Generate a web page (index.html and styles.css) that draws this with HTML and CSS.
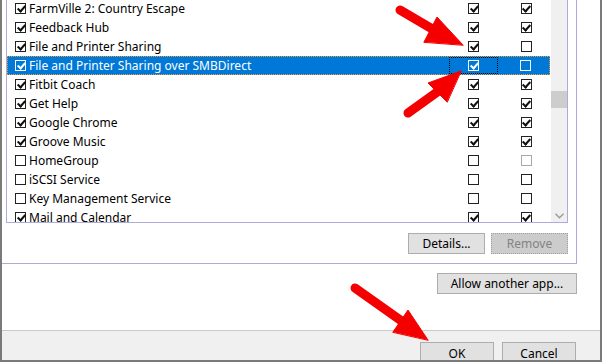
FILE: index.html
```html
<!DOCTYPE html>
<html>
<head>
<meta charset="utf-8">
<link rel="stylesheet" href="styles.css">
</head>
<body>
<div class="window">
  <div class="content">
    <div class="group">
      <div class="listbox">
        <div class="rows">
          <div class="row"><span class="cb on"></span><span class="name">FarmVille 2: Country Escape</span><span class="col"><span class="cb on"></span></span><span class="col c2"><span class="cb on"></span></span></div>
          <div class="row"><span class="cb on"></span><span class="name">Feedback Hub</span><span class="col"><span class="cb on"></span></span><span class="col c2"><span class="cb on"></span></span></div>
          <div class="row"><span class="cb on"></span><span class="name">File and Printer Sharing</span><span class="col"><span class="cb on"></span></span><span class="col c2"><span class="cb"></span></span></div>
          <div class="row sel"><span class="cb on"></span><span class="name">File and Printer Sharing over SMBDirect</span><span class="col focus"><span class="cb on"></span></span><span class="col c2"><span class="cb"></span></span></div>
          <div class="row"><span class="cb on"></span><span class="name">Fitbit Coach</span><span class="col"><span class="cb on"></span></span><span class="col c2"><span class="cb on"></span></span></div>
          <div class="row"><span class="cb on"></span><span class="name">Get Help</span><span class="col"><span class="cb on"></span></span><span class="col c2"><span class="cb on"></span></span></div>
          <div class="row"><span class="cb on"></span><span class="name">Google Chrome</span><span class="col"><span class="cb on"></span></span><span class="col c2"><span class="cb on"></span></span></div>
          <div class="row"><span class="cb on"></span><span class="name">Groove Music</span><span class="col"><span class="cb on"></span></span><span class="col c2"><span class="cb on"></span></span></div>
          <div class="row"><span class="cb"></span><span class="name">HomeGroup</span><span class="col"><span class="cb"></span></span><span class="col c2"><span class="cb dis"></span></span></div>
          <div class="row"><span class="cb"></span><span class="name">iSCSI Service</span><span class="col"><span class="cb"></span></span><span class="col c2"><span class="cb"></span></span></div>
          <div class="row"><span class="cb"></span><span class="name">Key Management Service</span><span class="col"><span class="cb"></span></span><span class="col c2"><span class="cb"></span></span></div>
          <div class="row"><span class="cb on"></span><span class="name">Mail and Calendar</span><span class="col"><span class="cb on"></span></span><span class="col c2"><span class="cb on"></span></span></div>
        </div>
        <div class="scrollbar">
          <div class="thumb"></div>
          <svg class="chev" width="9" height="6" viewBox="0 0 9 6"><path d="M0.5 0.8 L4.5 4.8 L8.5 0.8" fill="none" stroke="#9a9a9a" stroke-width="1.4"/></svg>
        </div>
      </div>
      <div class="btnrow">
        <button class="btn details">Details...</button>
        <button class="btn remove" disabled>Remove</button>
      </div>
    </div>
    <div class="allowrow">
      <button class="btn allow">Allow another app...</button>
    </div>
  </div>
  <div class="footer">
    <button class="btn ok">OK</button>
    <button class="btn cancel">Cancel</button>
  </div>
</div>
<svg class="arrows" width="602" height="362" viewBox="0 0 602 362">
  <g fill="#f50000" stroke="#f50000" stroke-linecap="round" stroke-linejoin="round">
    <line x1="400" y1="10" x2="434" y2="30" stroke-width="9"/>
    <polygon points="463,45 437,17 424,42" stroke-width="1"/>
    <line x1="408" y1="113" x2="440" y2="90" stroke-width="9"/>
    <polygon points="461,71 428,83 447,102" stroke-width="1"/>
    <line x1="355" y1="288" x2="403" y2="322" stroke-width="9"/>
    <polygon points="428,340 408,310 393,332" stroke-width="1"/>
  </g>
</svg>
</body>
</html>
```
FILE: styles.css
```css
html, body {
  margin: 0;
  padding: 0;
}
body {
  width: 602px;
  height: 362px;
  overflow: hidden;
  position: relative;
  font-family: "Noto Sans", "Open Sans", sans-serif;
  font-size: 12px;
  color: #000;
  background: #fff;
}
.window {
  box-sizing: border-box;
  width: 602px;
  height: 362px;
  border-left: 2px solid #7a7a7a;
  border-right: 2px solid #7a7a7a;
  border-bottom: 2px solid #7a7a7a;
  display: flex;
  flex-direction: column;
}
.content {
  height: 330px;
  background: #fff;
  display: flex;
  flex-direction: column;
}
.group {
  width: 575px;
  box-sizing: border-box;
  height: 264px;
  border-right: 1px solid #acacd8;
  border-bottom: 1px solid #acacd8;
  padding: 0 8px 0 4px;
  display: flex;
  flex-direction: column;
}
.listbox {
  height: 223px;
  box-sizing: border-box;
  border: 1px solid #acacd8;
  border-top: none;
  display: flex;
  overflow: hidden;
}
.rows {
  width: 543px;
  margin-top: -1px;
  display: flex;
  flex-direction: column;
}
.row {
  height: 19px;
  flex: none;
  box-sizing: border-box;
  display: flex;
  align-items: center;
  padding-left: 8px;
  white-space: nowrap;
}
.row .name {
  flex: 1;
  margin-left: 3px;
  line-height: 19px;
}
.row .col {
  width: 49px;
  height: 19px;
  box-sizing: border-box;
  display: flex;
  align-items: center;
  justify-content: center;
}
.row .col.c2 {
  width: 48px;
  margin-left: 4px;
}
.cb {
  width: 11px;
  height: 11px;
  flex: none;
  box-sizing: border-box;
  border: 1px solid #222;
  background: #fff;
  position: relative;
}
.cb.on::after {
  content: "";
  position: absolute;
  left: 2.5px;
  top: 0px;
  width: 3px;
  height: 6px;
  border: solid #111;
  border-width: 0 2px 2px 0;
  transform: rotate(42deg);
}
.cb.dis {
  border-color: #a8a8a8;
}
.row.sel {
  background: #0078d7;
  color: #fff;
  border: 1px dotted #f39a2c;
  padding-left: 7px;
}
.row.sel .cb {
  background: transparent;
  border-color: #fff;
}
.row.sel .cb.on::after {
  border-color: #fff;
}
.row.sel .name {
  line-height: 17px;
}
.row.sel .col {
  height: 17px;
}
.row.sel .col.focus {
  border: 1px dotted #000;
}
.row.sel .col.c2 {
  width: 47px;
}
.scrollbar {
  width: 16px;
  margin-left: 1px;
  background: #f0f0f0;
  display: flex;
  flex-direction: column;
  align-items: center;
  padding-top: 91px;
  box-sizing: border-box;
}
.thumb {
  width: 16px;
  height: 17px;
  background: #cdcdcd;
}
.chev {
  margin-top: auto;
  margin-bottom: 3px;
}
.btn {
  font-family: inherit;
  font-size: 12px;
  color: #000;
  background: #e1e1e1;
  border: 1px solid #adadad;
  height: 21px;
  padding: 0;
  margin: 0;
  line-height: 19px;
  box-sizing: border-box;
}
.btnrow {
  display: flex;
  justify-content: flex-end;
  gap: 6px;
  margin-top: 10px;
}
.details {
  width: 77px;
}
.remove {
  width: 77px;
  background: #cccccc;
  border: 1px dotted #a0a0a0;
  color: #838383;
}
.allowrow {
  width: 575px;
  display: flex;
  justify-content: flex-end;
  margin-top: 9px;
}
.allow {
  width: 140px;
}
.footer {
  flex: 1;
  background: #f0f0f0;
  border-top: 1px solid #cacaca;
  display: flex;
  justify-content: flex-end;
  gap: 8px;
  padding: 11px 24px 0 0;
  overflow: hidden;
}
.ok, .cancel {
  width: 74px;
  height: 22px;
  flex: none;
}
.arrows {
  position: absolute;
  left: 0;
  top: 0;
  pointer-events: none;
}
```
